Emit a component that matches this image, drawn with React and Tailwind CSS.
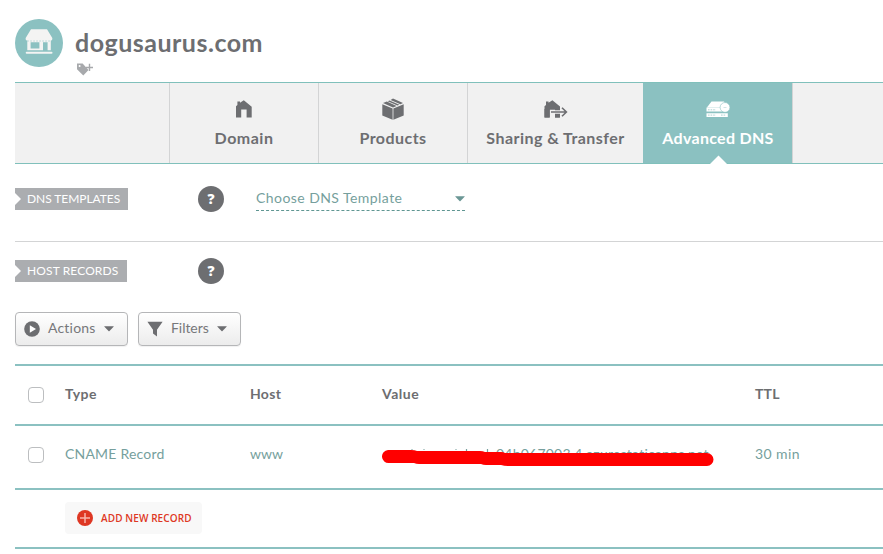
import React from "react";

const ink = "#6d6e71";

function StoreIcon() {
  return (
    <svg width="28" height="26" viewBox="0 0 28 26" fill="#f4f4f3">
      <path d="M6 1.2H22L27.3 10V11.3a1.5 1.5 0 0 1-2.96 0a1.5 1.5 0 0 1-2.96 0a1.5 1.5 0 0 1-2.96 0a1.5 1.5 0 0 1-2.96 0a1.5 1.5 0 0 1-2.96 0a1.5 1.5 0 0 1-2.96 0a1.5 1.5 0 0 1-2.96 0a1.5 1.5 0 0 1-2.96 0a1.5 1.5 0 0 1-2.96 0V10Z" />
      <path fillRule="evenodd" d="M2.3 11H25.8V22.3H2.3ZM5.6 14.2V20.4H14.4V14.2ZM18 14.2V22.3H22.6V14.2Z" />
      <path d="M2.3 13H25.8" stroke="#8bc1c1" strokeWidth="0.6" strokeDasharray="1.5 1.5" />
      <rect x="0.7" y="23.7" width="26.8" height="2.1" rx="1" />
    </svg>
  );
}

function TagPlusIcon() {
  return (
    <svg width="17" height="13" viewBox="0 0 17 13">
      <path fillRule="evenodd" fill="#a7a9ac" d="M0 0.6H5.6L11.5 7L6.3 12.4L0 6.3ZM2.6 1.9A1 1 0 1 0 2.6 3.9A1 1 0 1 0 2.6 1.9Z" />
      <path d="M12.5 0.8V8M9 4.5H16" stroke="#a7a9ac" strokeWidth="1.4" />
    </svg>
  );
}

function HomeIcon() {
  return (
    <svg width="18" height="18" viewBox="0 0 18 18" fill={ink}>
      <path d="M1 17.5V6.3L2.4 5V1.5H5V2.8L8.8 0.3L16.7 6.7V17.5H11.6V9.6H6.2V17.5Z" />
    </svg>
  );
}

function BoxIcon() {
  return (
    <svg width="22" height="22" viewBox="0 0 22 22" fill={ink}>
      <path d="M0.3 6.2L10.6 10.4V21.8L0.3 17.6Z" />
      <path d="M21.7 6.2L11.4 10.4V21.8L21.7 17.6Z" />
      <path d="M1 5.1L4.8 3.6L14.6 7.9L11 9.4Z" />
      <path d="M5.7 3.2L7.6 2.4L17.4 6.7L15.5 7.5Z" />
      <path d="M8.6 2L11 0.6L21 5.1L18.4 6.3Z" />
    </svg>
  );
}

function TransferIcon() {
  return (
    <svg width="24" height="18" viewBox="0 0 24 18">
      <path fill={ink} d="M0.5 17.4V6.3L2 5V1.5H4.5V2.8L8.4 0.2L16 6.6V17.4H11V9.8H5.7V17.4Z" />
      <path d="M6 12H22M18 7.2L22.8 12L18 16.8" stroke="#f1f1f1" strokeWidth="3.6" fill="none" />
      <path fill={ink} d="M0.5 9H5.7V17.4H0.5zM11 14.3h4.8v3.1H11z" />
      <path d="M7 12H22M18 7.7L22.4 12L18 16.3" stroke={ink} strokeWidth="1.6" fill="none" />
    </svg>
  );
}

function ServerIcon() {
  return (
    <svg width="24" height="17" viewBox="0 0 24 17">
      <path fill="#fff" d="M5.5 0.5H18L22 6.6H0.9Z" />
      <path fill="#fff" d="M0.5 6.6H21.8V10.6H0.5ZM0.5 12.2H21.8V16H0.5Z" />
      <path d="M2 8.8H10M2 14.1H10M15 14.1H20" stroke="#8bc1c1" strokeWidth="0.7" strokeDasharray="1.6 1" />
      <circle cx="19" cy="6.4" r="4.9" fill="#fff" stroke="#8bc1c1" strokeWidth="0.6" />
      <path d="M17.5 6.5H20.5" stroke="#8bc1c1" strokeWidth="0.4" />
    </svg>
  );
}

function Caret({ className }) {
  return (
    <svg width="10" height="6" viewBox="0 0 10 6" className={className}>
      <path d="M0.2 0.6Q0 0.3 0.5 0.3H9.5Q10 0.3 9.8 0.6L5.5 5Q5 5.5 4.5 5Z" fill="currentColor" />
    </svg>
  );
}

function Tab({ icon, label, width, spacing, active }) {
  return (
    <div
      className={`relative flex shrink-0 flex-col items-center border-l ${width} ${
        active ? "border-[#8bc1c1] bg-[#8bc1c1] text-white" : "border-[#d3d4d5] text-[#6d6e71]"
      }`}
    >
      <div className="mt-3.5 flex h-6 items-center justify-center">{icon}</div>
      <div className={`mt-[7px] whitespace-nowrap text-base leading-5 font-bold ${spacing}`}>{label}</div>
      {active && (
        <svg className="absolute bottom-[-1px] left-[66px]" width="17" height="9" viewBox="0 0 17 9">
          <path d="M0 9L8.5 0.5L17 9Z" fill="#fff" />
        </svg>
      )}
    </div>
  );
}

function SectionLabel({ children, width }) {
  return (
    <div className={`relative flex h-[22px] shrink-0 items-center bg-[#abadb0] pl-3 text-[12px] whitespace-nowrap text-white ${width}`}>
      <svg className="absolute top-[5px] left-0" width="6" height="12" viewBox="0 0 6 12">
        <path d="M0 0L6 6L0 12Z" fill="#fff" />
      </svg>
      {children}
    </div>
  );
}

function Help() {
  return (
    <div className="flex size-[26px] shrink-0 items-center justify-center rounded-full bg-[#6d6e71] font-['Open_Sans',sans-serif] text-sm leading-none font-extrabold text-white">
      ?
    </div>
  );
}

function Checkbox() {
  return <div className="ml-[13px] size-4 rounded-[4px] border border-[#bcbec0] bg-white" />;
}

const columns = "grid grid-cols-[50px_185px_132px_373px_1fr] items-center text-sm leading-5";
const button =
  "flex h-[34px] items-center rounded-[4px] border border-[#b5b6b8] bg-linear-to-b from-white to-[#ececec] text-sm text-[#77787b] shadow-[0_1px_1px_rgba(0,0,0,0.06)]";

export default function App() {
  return (
    <div className="h-[554px] w-[883px] overflow-hidden bg-white pl-[15px] font-[Lato,sans-serif]">
      <header className="flex h-[82px] pt-[19px]">
        <div className="flex size-12 shrink-0 items-center justify-center rounded-full bg-[#8bc1c1] pb-1">
          <StoreIcon />
        </div>
        <div className="ml-3">
          <h1 className="mt-[7px] text-[25px] leading-8 font-bold tracking-[0.5px] text-[#6d6e71]">dogusaurus.com</h1>
          <div className="mt-[5px] ml-0.5"><TagPlusIcon /></div>
        </div>
      </header>

      <nav className="flex h-[82px] border-y border-[#80c0bb] bg-[#f1f1f1]">
        <div className="w-[154px] shrink-0" />
        <Tab icon={<HomeIcon />} label="Domain" width="w-[149px]" spacing="tracking-[0.5px]" />
        <Tab icon={<BoxIcon />} label="Products" width="w-[149px]" spacing="tracking-[0.45px]" />
        <Tab icon={<TransferIcon />} label="Sharing & Transfer" width="w-[176px]" spacing="tracking-[0.45px]" />
        <Tab icon={<ServerIcon />} label="Advanced DNS" width="w-[149px]" spacing="tracking-[0.3px]" active />
        <div className="grow border-l border-[#d3d4d5]" />
      </nav>

      <section className="flex h-[78px] items-start border-b border-[#d3d4d5] pt-[22px]">
        <div className="flex w-[183px] shrink-0 pt-0.5">
          <SectionLabel width="w-[113px]"><span className="tracking-[-0.05px]">DNS TEMPLATES</span></SectionLabel>
        </div>
        <Help />
        <div className="ml-8 flex h-[25px] w-[209px] items-center justify-between border-b border-dashed border-[#5f9692] text-[#6b9795]">
          <span className="text-sm tracking-[0.44px] text-[#769f9d]">Choose DNS Template</span>
          <Caret className="mt-0.5" />
        </div>
      </section>

      <section className="flex h-[70px] items-start pt-4">
        <div className="flex w-[183px] shrink-0 pt-0.5">
          <SectionLabel width="w-[112px]"><span className="tracking-[0.12px]">HOST RECORDS</span></SectionLabel>
        </div>
        <Help />
      </section>

      <div className="flex h-[52px] gap-2.5">
        <div className={`${button} w-[113px] pl-2`}>
          <svg width="16" height="16" viewBox="0 0 16 16">
            <circle cx="8" cy="8" r="7.8" fill={ink} />
            <path d="M5.8 4.3L12 8L5.8 11.7Z" fill="#fff" />
          </svg>
          <span className="ml-2 pb-0.5 tracking-[0.2px]">Actions</span>
          <Caret className="mr-[13px] ml-auto text-[#6d6e71]" />
        </div>
        <div className={`${button} w-[103px] pl-2`}>
          <svg width="16" height="16" viewBox="0 0 16 16">
            <path d="M0.4 0.8H15.6L10 8.7V15.6L6 12.6V8.7Z" fill={ink} />
          </svg>
          <span className="ml-2 pb-0.5 tracking-[-0.05px]">Filters</span>
          <Caret className="mr-[13px] ml-auto text-[#6d6e71]" />
        </div>
      </div>

      <div className="border-y-2 border-[#8bc1c1]">
        <div className={`${columns} h-[58px] font-bold text-[#6d6e71]`}>
          <Checkbox />
          <span className="pb-0.5 tracking-[0.45px]">Type</span>
          <span className="pb-0.5 tracking-[0.3px]">Host</span>
          <span className="pb-0.5 tracking-[0.5px]">Value</span>
          <span className="pb-0.5 tracking-[0.2px]">TTL</span>
        </div>
      </div>

      <div className={`${columns} h-[62px] pb-1 text-[#769f9d]`}>
        <Checkbox />
        <span className="pb-0.5 tracking-[0.2px]">CNAME Record</span>
        <span className="pb-0.5">www</span>
        <div className="relative h-5">
          <div className="-mt-px ml-[114px] whitespace-nowrap tracking-[0.22px]">04b067003.4.azurestaticapps.net</div>
          <svg className="absolute top-[4px] left-0" width="334" height="20" viewBox="0 0 334 20">
            <path d="M29.5 0.5h1M41.5 0.5h1M73.5 0.5h1M84.5 0v2M105.5 0v4" stroke="#769f9d" strokeWidth="1.2" />
            <path
              d="M6 1H29Q33 1 35 2H98Q101 2 103 3H119Q122 3 123 4H325A6.5 6.5 0 0 1 325 17H126Q122 17 119 16H104Q101 16 99 15H37Q34 15 32 14H7A6.5 6.5 0 0 1 6 1Z"
              fill="#ff0000"
            />
          </svg>
        </div>
        <span className="pb-0.5 tracking-[0.4px]">30 min</span>
      </div>

      <div className="flex h-[61px] border-y-2 border-[#8bc1c1] pt-3 pl-[50px]">
        <div className="flex h-8 w-[137px] items-center rounded-[4px] bg-[#f8f8f8] pl-3 font-['Open_Sans',sans-serif]">
          <svg width="16" height="16" viewBox="0 0 16 16">
            <circle cx="8" cy="8" r="8" fill="#de3723" />
            <path d="M8 3V13M3 8H13" stroke="#f7b5ac" strokeWidth="1.5" />
          </svg>
          <span className="ml-2 whitespace-nowrap text-[10px] font-semibold tracking-[0.1px] text-[#de3723]">ADD NEW RECORD</span>
        </div>
      </div>
    </div>
  );
}
